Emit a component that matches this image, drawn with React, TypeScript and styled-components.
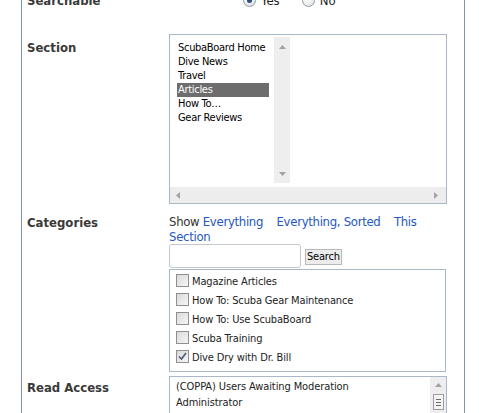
import React from 'react'
import styled, { createGlobalStyle } from 'styled-components'

const FONT = `'DejaVu Sans Condensed', 'DejaVu Sans', 'Liberation Sans', sans-serif`

const GlobalStyle = createGlobalStyle`
  html, body {
    margin: 0;
    padding: 0;
    background: #fff;
  }
  body {
    font-family: ${FONT};
    color: #000;
  }
`

const sections = ['ScubaBoard Home', 'Dive News', 'Travel', 'Articles', 'How To…', 'Gear Reviews']

const categories = [
  { name: 'Magazine Articles', checked: false },
  { name: 'How To: Scuba Gear Maintenance', checked: false },
  { name: 'How To: Use ScubaBoard', checked: false },
  { name: 'Scuba Training', checked: false },
  { name: 'Dive Dry with Dr. Bill', checked: true },
]

const Arrow: React.FC<{ dir: 'up' | 'down' | 'left' | 'right' }> = ({ dir }) => {
  const points = {
    up: '0,4 3.5,0 7,4',
    down: '0,0 3.5,4 7,0',
    left: '4,0 0,3.5 4,7',
    right: '0,0 4,3.5 0,7',
  }[dir]
  const vertical = dir === 'up' || dir === 'down'
  return (
    <svg width={vertical ? 7 : 4} height={vertical ? 4 : 7} viewBox={vertical ? '0 0 7 4' : '0 0 4 7'}>
      <polygon points={points} fill='#a3a3a3' />
    </svg>
  )
}

const App: React.FC = () => (
  <Page>
    <GlobalStyle />
    <Panel>
      <Row $top={0}>
        <Label>Searchable</Label>
        <RadioGroup>
          <RadioItem>
            <Radio $checked />
            Yes
          </RadioItem>
          <RadioItem>
            <Radio />
            No
          </RadioItem>
        </RadioGroup>
      </Row>

      <Row $top={26}>
        <Label $offset={6}>Section</Label>
        <ScrollBox>
          <ScrollArea>
            <SelectList>
              <Options>
                {sections.map((s) => (
                  <Option key={s} $selected={s === 'Articles'}>
                    {s}
                  </Option>
                ))}
              </Options>
              <VScroll>
                <Arrow dir='up' />
                <Arrow dir='down' />
              </VScroll>
            </SelectList>
          </ScrollArea>
          <HScroll>
            <Arrow dir='left' />
            <Arrow dir='right' />
          </HScroll>
        </ScrollBox>
      </Row>

      <Row $top={10}>
        <Label $offset={1}>Categories</Label>
        <div>
          <ShowLine>
            Show <Link>Everything</Link> <Link>Everything, Sorted</Link> <Link>This Section</Link>
          </ShowLine>
          <SearchRow>
            <SearchInput />
            <SearchButton>Search</SearchButton>
          </SearchRow>
          <CheckList>
            {categories.map((c) => (
              <CheckRow key={c.name}>
                <CheckBox $checked={c.checked}>
                  {c.checked && (
                    <svg width='9' height='9' viewBox='0 0 9 9'>
                      <path d='M1 4.5 L3.5 7 L8 1' stroke='#4a5a7a' strokeWidth='1.6' fill='none' />
                    </svg>
                  )}
                </CheckBox>
                {c.name}
              </CheckRow>
            ))}
          </CheckList>
        </div>
      </Row>

      <Row $top={4}>
        <Label $offset={4}>Read Access</Label>
        <AccessBox>
          <AccessList>
            <AccessItem>(COPPA) Users Awaiting Moderation</AccessItem>
            <AccessItem>Administrator</AccessItem>
          </AccessList>
          <AccessScroll>
            <Arrow dir='up' />
            <Thumb>
              <Grip />
              <Grip />
              <Grip />
            </Thumb>
          </AccessScroll>
        </AccessBox>
      </Row>
    </Panel>
  </Page>
)

const Page = styled.div`
  padding-left: 21px;
  height: 413px;
  overflow: hidden;
`

const Panel = styled.div`
  width: 444px;
  box-sizing: border-box;
  margin-top: -7px;
  padding-left: 5px;
  min-height: 460px;
  border-left: 1px solid #7d95aa;
  border-right: 1px solid #7d95aa;
`

const Row = styled.div<{ $top: number }>`
  display: grid;
  grid-template-columns: 142px 278px;
  align-items: start;
  padding-top: ${(p) => p.$top}px;
`

const Label = styled.div<{ $offset?: number }>`
  padding-top: ${(p) => p.$offset ?? 0}px;
  font: bold 13px/15px ${FONT};
  color: #3a3a3a;
`

const RadioGroup = styled.div`
  display: flex;
  gap: 22px;
  padding-left: 74px;
  height: 15px;
  align-items: center;
  font-size: 13px;
  color: #222;
`

const RadioItem = styled.label`
  display: flex;
  align-items: center;
  gap: 5px;
`

const Radio = styled.span<{ $checked?: boolean }>`
  width: 11px;
  height: 11px;
  border-radius: 50%;
  border: 1px solid #8c9aab;
  background: radial-gradient(circle at 40% 35%, #ffffff, #dcdcdc);
  display: flex;
  align-items: center;
  justify-content: center;
  &::after {
    content: '';
    width: 5px;
    height: 5px;
    border-radius: 50%;
    background: ${(p) => (p.$checked ? '#2f4f7f' : 'transparent')};
  }
`

const ScrollBox = styled.div`
  width: 278px;
  height: 170px;
  box-sizing: border-box;
  border: 1px solid #a9b9c8;
  display: flex;
  flex-direction: column;
`

const ScrollArea = styled.div`
  flex: 1;
  padding-top: 2px;
`

const SelectList = styled.div`
  display: flex;
  width: 120px;
  height: 146px;
`

const Options = styled.div`
  width: 104px;
  box-sizing: border-box;
  padding: 4px 5px 0 7px;
`

const Option = styled.div<{ $selected?: boolean }>`
  height: 14px;
  padding-left: 1px;
  font-size: 11px;
  line-height: 14px;
  letter-spacing: -0.3px;
  white-space: nowrap;
  background: ${(p) => (p.$selected ? '#6d6d6d' : 'transparent')};
  color: ${(p) => (p.$selected ? '#fff' : '#000')};
`

const VScroll = styled.div`
  width: 16px;
  background: #eeeeee;
  display: flex;
  flex-direction: column;
  align-items: center;
  justify-content: space-between;
  padding: 8px 0 7px;
  box-sizing: border-box;
`

const HScroll = styled.div`
  height: 16px;
  background: #ededed;
  display: flex;
  align-items: center;
  justify-content: space-between;
  padding: 0 8px 0 6px;
`

const ShowLine = styled.div`
  font-size: 13px;
  line-height: 15px;
  letter-spacing: -0.3px;
  color: #333;
`

const Link = styled.a`
  color: #2457c0;
  margin-right: 10px;
  cursor: pointer;
`

const SearchRow = styled.div`
  display: flex;
  align-items: flex-start;
  gap: 4px;
  height: 24px;
`

const SearchInput = styled.input`
  width: 132px;
  height: 24px;
  box-sizing: border-box;
  border: 1px solid #c3c9cf;
  border-radius: 3px;
  padding: 0 3px;
  font: 11px ${FONT};
`

const SearchButton = styled.button`
  margin-top: 5px;
  height: 16px;
  padding: 0 1px;
  box-sizing: border-box;
  border: 1px solid #b8b8b8;
  background: #ececec;
  font: 11px/14px ${FONT};
  letter-spacing: -0.2px;
  color: #000;
`

const CheckList = styled.div`
  margin-top: 1px;
  width: 277px;
  height: 103px;
  box-sizing: border-box;
  border: 1px solid #a9b9c8;
  padding: 2px 0 0 6px;
`

const CheckRow = styled.div`
  display: flex;
  align-items: center;
  gap: 3px;
  height: 19px;
  font-size: 11px;
  letter-spacing: -0.15px;
  color: #222;
`

const CheckBox = styled.span<{ $checked?: boolean }>`
  width: 13px;
  height: 13px;
  margin-bottom: 3px;
  box-sizing: border-box;
  border: 1px solid #8f8f8f;
  background: linear-gradient(135deg, #d9d9d9, #f6f6f6);
  display: flex;
  align-items: center;
  justify-content: center;
`

const AccessBox = styled.div`
  width: 278px;
  height: 60px;
  box-sizing: border-box;
  border: 1px solid #a9b9c8;
  display: flex;
`

const AccessList = styled.div`
  flex: 1;
  padding: 2px 0 0 6px;
`

const AccessItem = styled.div`
  font-size: 11px;
  line-height: 16px;
  letter-spacing: -0.1px;
  color: #222;
`

const AccessScroll = styled.div`
  width: 16px;
  background: #eeeeee;
  display: flex;
  flex-direction: column;
  align-items: center;
  padding-top: 6px;
  gap: 7px;
`

const Thumb = styled.div`
  width: 11px;
  height: 16px;
  box-sizing: border-box;
  border: 1px solid #9d9d9d;
  background: #f4f4f4;
  display: flex;
  flex-direction: column;
  justify-content: center;
  align-items: center;
  gap: 2px;
`

const Grip = styled.span`
  width: 5px;
  height: 1px;
  background: #6a6a6a;
`

export default App
